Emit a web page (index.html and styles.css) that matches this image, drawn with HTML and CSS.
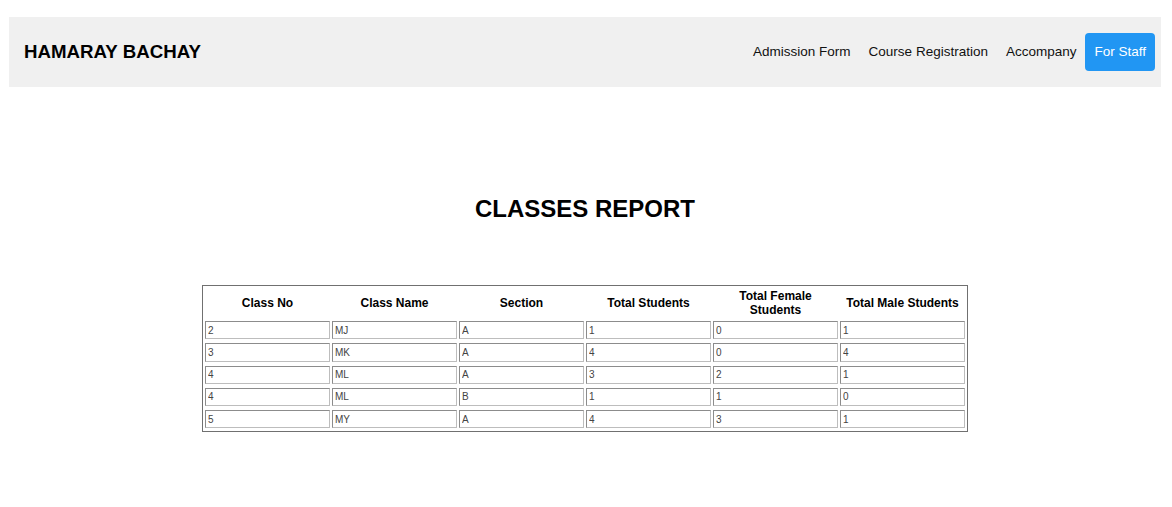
FILE: index.html
```html
<!DOCTYPE html>
<html>
<head>
<meta charset="utf-8">
<link rel="stylesheet" href="styles.css">
</head>
<body>
<header class="topnav">
  <div class="logo">HAMARAY BACHAY</div>
  <nav class="links">
    <a class="link" href="#">Admission Form</a>
    <a class="link" href="#">Course Registration</a>
    <a class="link" href="#">Accompany</a>
    <a class="link active" href="#">For Staff</a>
  </nav>
</header>
<main class="content">
<h1 class="title">CLASSES REPORT</h1>
<table class="report">
  <thead>
    <tr><th>Class No</th><th>Class Name</th><th>Section</th><th>Total Students</th><th>Total Female Students</th><th>Total Male Students</th></tr>
  </thead>
  <tbody>
    <tr><td><input value="2"></td><td><input value="MJ"></td><td><input value="A"></td><td><input value="1"></td><td><input value="0"></td><td><input value="1"></td></tr>
    <tr><td><input value="3"></td><td><input value="MK"></td><td><input value="A"></td><td><input value="4"></td><td><input value="0"></td><td><input value="4"></td></tr>
    <tr><td><input value="4"></td><td><input value="ML"></td><td><input value="A"></td><td><input value="3"></td><td><input value="2"></td><td><input value="1"></td></tr>
    <tr><td><input value="4"></td><td><input value="ML"></td><td><input value="B"></td><td><input value="1"></td><td><input value="1"></td><td><input value="0"></td></tr>
    <tr><td><input value="5"></td><td><input value="MY"></td><td><input value="A"></td><td><input value="4"></td><td><input value="3"></td><td><input value="1"></td></tr>
  </tbody>
</table>
</main>
</body>
</html>
```
FILE: styles.css
```css
body {
  margin: 8px;
  font-family: "Liberation Sans", Arial, sans-serif;
  color: #000;
  background: #fff;
}
.topnav {
  margin: 9px 3px 0 1px;
  height: 70px;
  background: #f0f0f0;
  display: flex;
  align-items: center;
  justify-content: space-between;
  padding: 0 6px 0 15px;
}
.logo {
  font-size: 18.7px;
  font-weight: bold;
}
.links {
  display: flex;
  align-items: center;
}
.link {
  font-size: 13.5px;
  line-height: 16px;
  color: #111;
  text-decoration: none;
  padding: 11px 9px;
}
.link.active {
  background: #2196f3;
  color: #fff;
  border-radius: 4px;
}
.content {
  padding-right: 2px;
}
.title {
  text-align: center;
  font-size: 24px;
  line-height: 28px;
  margin: 108px 0 0;
}
.report {
  margin: 62px auto 0;
  border: 1px solid #707070;
  border-spacing: 2px;
  border-collapse: separate;
}
.report th {
  width: 125px;
  padding: 1px 0;
  height: 28px;
  font-size: 12px;
  line-height: 14px;
  font-weight: bold;
  text-align: center;
}
.report td {
  padding: 1px 0;
}
.report input {
  display: block;
  box-sizing: border-box;
  width: 125px;
  height: 18.25px;
  margin: 0;
  padding: 0 2px;
  font-family: "Liberation Sans", Arial, sans-serif;
  font-size: 10px;
  color: #444;
  background: #fff;
  border: 1px solid #bdbdbd;
  border-top-color: #8c8c8c;
  border-left-color: #8c8c8c;
  border-radius: 0;
  outline: none;
}
```
